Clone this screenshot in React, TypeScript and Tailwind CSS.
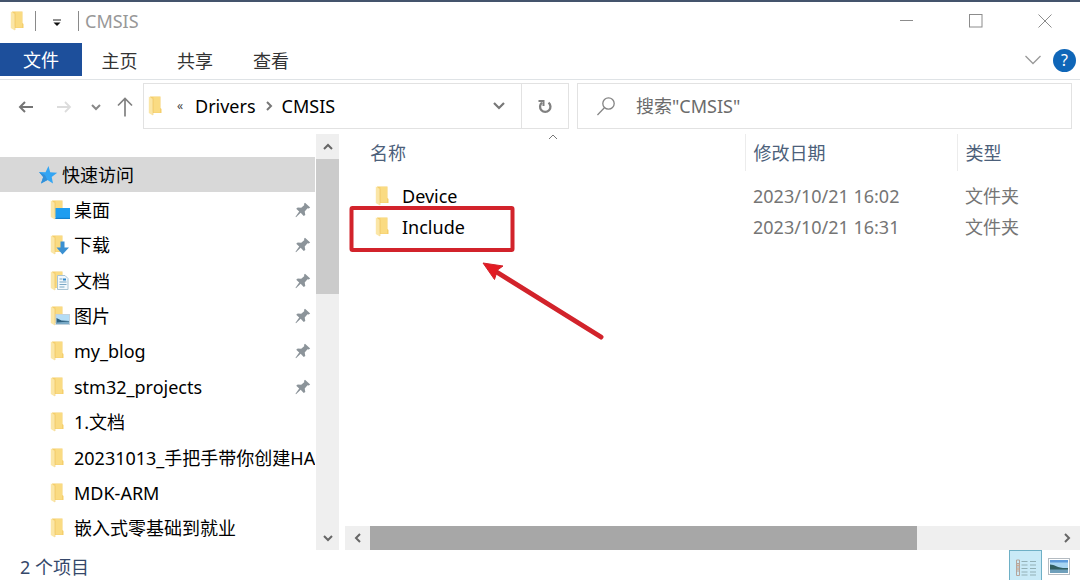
import { useState, type ReactNode } from "react";

type Badge = "desktop" | "download" | "document" | "picture";

interface Place {
  name: string;
  badge?: Badge;
  pinned?: boolean;
}

const places: Place[] = [
  { name: "桌面", badge: "desktop", pinned: true },
  { name: "下载", badge: "download", pinned: true },
  { name: "文档", badge: "document", pinned: true },
  { name: "图片", badge: "picture", pinned: true },
  { name: "my_blog", pinned: true },
  { name: "stm32_projects", pinned: true },
  { name: "1.文档" },
  { name: "20231013_手把手带你创建HA" },
  { name: "MDK-ARM" },
  { name: "嵌入式零基础到就业" },
];

const files = [
  { name: "Device", modified: "2023/10/21 16:02", kind: "文件夹" },
  { name: "Include", modified: "2023/10/21 16:31", kind: "文件夹" },
];

function FolderShape() {
  return (
    <g>
      <path d="M2 .500h10.500v11.500l1 1v4h-9z" fill="#f5cf6c" />
      <path d="M5.500 1h6.500v15.500h-6.500z" fill="#fadb82" />
      <path d="M.800.500l4 2.500v16.500l-4-2.500z" fill="#fbe6a6" />
      <path d="M5 3v16" stroke="#eecb70" strokeWidth="0.600" />
    </g>
  );
}

function FolderIcon({ badge }: { badge?: Badge }) {
  return (
    <svg width="20" height="20" viewBox="0 0 20 20" className="shrink-0" aria-hidden="true">
      <FolderShape />
      {badge === "desktop" && (
        <g>
          <rect x="5.500" y="8" width="14.500" height="11" fill="#1f9df0" />
          <path d="M5.500 18.400h14.500" stroke="#1580cc" strokeWidth="1.200" />
        </g>
      )}
      {badge === "download" && (
        <path d="M10.500 6.500h4v6h4.500l-6.500 7-6-7h4z" fill="#3a90d2" />
      )}
      {badge === "document" && (
        <g>
          <path d="M7.500 4.500h7.500l3 3v11h-10.500z" fill="#f2f8fc" stroke="#a9c4d4" />
          <path d="M9.500 8h3M9.500 11h7M9.500 13.500h7M9.500 16h5" stroke="#7ba8c6" />
          <path d="M13 8.500h3" stroke="#2f86c9" strokeWidth="2" />
        </g>
      )}
      {badge === "picture" && (
        <g>
          <rect x="6" y="8.500" width="13.500" height="10" fill="#b4ddf6" stroke="#c3d2dc" />
          <path d="M6.500 12l5 2.500 7.500.500v3h-12.500z" fill="#2e6280" />
          <path d="M6.500 16.500l12.500-1v2.500h-12.500z" fill="#79a9c6" />
        </g>
      )}
    </svg>
  );
}

function SmallFolder() {
  return (
    <svg width="14" height="20" viewBox="0 0 14 20" className="shrink-0" aria-hidden="true">
      <FolderShape />
    </svg>
  );
}

function StarIcon() {
  return (
    <svg width="20" height="20" viewBox="0 0 20 20" className="shrink-0" aria-hidden="true">
      <path d="M10.500 1l1.700 6.200 7 .500-5.500 4.300 1.300 6.500-5.500-3.500-6.500 3.500 2.200-6.500-4.200-5 6.500.200z" fill="#33a5f3" />
      <path d="M9.500 15l-6.500 3.500 2.200-6.500-4.200-5 6 3z" fill="#3390d8" />
    </svg>
  );
}

function PinIcon() {
  return (
    <svg width="16" height="16" viewBox="0 0 16 16" className="shrink-0" aria-hidden="true">
      <path d="M10 .800l5.200 4.700-1.500 1-1.200-.300-2.800 3.300.600 3.500-1.600 1-3-3.300-4.700 4.500-.500-.500 3.700-5.300-3-2.700 1.500-1.200 3.500.300 3.200-2.700-.500-1.200z" fill="#8c949a" />
    </svg>
  );
}

function Chevron({ direction, className }: { direction: "up" | "down" | "left" | "right"; className: string }) {
  const paths = {
    up: "M1 7l4-4 4 4",
    down: "M1 3l4 4 4-4",
    left: "M7 1l-4 4 4 4",
    right: "M3 1l4 4-4 4",
  };
  return (
    <svg width="10" height="10" viewBox="0 0 10 10" fill="none" stroke="currentColor" className={className} aria-hidden="true">
      <path d={paths[direction]} />
    </svg>
  );
}

function PlainButton({ label, className, children }: { label: string; className: string; children: ReactNode }) {
  return (
    <button type="button" aria-label={label} className={`flex shrink-0 items-center justify-center ${className}`}>
      {children}
    </button>
  );
}

function TitleBar() {
  return (
    <header className="flex h-[43px] items-center border-t-2 border-[#44546c] pb-[3px] pl-[10px] pr-[27px]">
      <SmallFolder />
      <span className="ml-[11px] h-5 w-px bg-[#8a8a8a]" />
      <PlainButton label="自定义快速访问工具栏" className="ml-3 h-6 w-[18px] pt-1">
        <svg width="8" height="8" viewBox="0 0 8 8" aria-hidden="true">
          <path d="M0 1h8" stroke="#222" />
          <path d="M.5 3.500h7l-3.500 3.500z" fill="#111" />
        </svg>
      </PlainButton>
      <span className="ml-3 h-5 w-px bg-[#8a8a8a]" />
      <h1 className="ml-[6px] text-[#989898]">CMSIS</h1>
      <div className="ml-auto flex items-center gap-[53px] text-[#8c8c8c]">
        <PlainButton label="最小化" className="size-4">
          <svg width="14" height="14" viewBox="0 0 14 14" stroke="currentColor"><path d="M0 6.500h13" /></svg>
        </PlainButton>
        <PlainButton label="最大化" className="size-4">
          <svg width="14" height="14" viewBox="0 0 14 14" fill="none" stroke="currentColor"><rect x=".5" y=".5" width="12.500" height="12.500" /></svg>
        </PlainButton>
        <PlainButton label="关闭" className="size-4">
          <svg width="14" height="14" viewBox="0 0 14 14" stroke="currentColor"><path d="M.5.500l13 13M13.500.500l-13 13" /></svg>
        </PlainButton>
      </div>
    </header>
  );
}

function Ribbon() {
  return (
    <nav className="flex h-[37px] items-start border-b border-[#dfe3e6] pr-1">
      <button type="button" className="h-[33px] w-[82px] bg-[#1d4f9b] text-white">文件</button>
      <button type="button" className="h-9 w-[75px] text-[#333]">主页</button>
      <button type="button" className="h-9 w-[76px] text-[#333]">共享</button>
      <button type="button" className="h-9 w-[76px] text-[#333]">查看</button>
      <div className="ml-auto flex h-[34px] items-center gap-3">
        <PlainButton label="展开功能区" className="h-6 w-4 text-[#999]">
          <svg width="16" height="10" viewBox="0 0 16 10" fill="none" stroke="currentColor" strokeWidth="1.300"><path d="M.5 1l7.500 7.500 7.500-7.500" /></svg>
        </PlainButton>
        <button type="button" className="size-[23px] rounded-full bg-[#0f66b8] text-base leading-[23px] text-white">?</button>
      </div>
    </nav>
  );
}

function AddressBar() {
  return (
    <div className="flex h-[54px] items-start pr-2 pt-[3px]">
      <div className="flex h-[46px] w-[143px] shrink-0 items-center pl-[18px] pt-[2px]">
        <PlainButton label="后退" className="h-6 w-4 text-[#757575]">
          <svg width="16" height="14" viewBox="0 0 16 14" fill="none" stroke="currentColor" strokeWidth="2"><path d="M15 7h-13M7 2l-5 5 5 5" /></svg>
        </PlainButton>
        <PlainButton label="前进" className="ml-[22px] h-6 w-4 text-[#dcdcdc]">
          <svg width="16" height="14" viewBox="0 0 16 14" fill="none" stroke="currentColor" strokeWidth="1.800"><path d="M1 7h13M9 2l5 5-5 5" /></svg>
        </PlainButton>
        <PlainButton label="最近浏览的位置" className="ml-[18px] h-6 w-3 text-[#888]">
          <Chevron direction="down" className="stroke-2" />
        </PlainButton>
        <PlainButton label="上移" className="ml-[15px] h-6 w-4 text-[#808080]">
          <svg width="16" height="20" viewBox="0 0 16 20" fill="none" stroke="currentColor" strokeWidth="1.700"><path d="M8 19.500v-18M1 8.500l7-7 7 7" /></svg>
        </PlainButton>
      </div>
      <div className="flex h-[46px] w-[426px] shrink-0 items-center border border-[#e2e2e2] pl-[4px] text-black">
        <SmallFolder />
        <span className="ml-[15px] w-[11px] text-xs text-[#444]">«</span>
        <button type="button" className="ml-[7px]">Drivers</button>
        <Chevron direction="right" className="mx-2 stroke-2 text-[#777]" />
        <button type="button">CMSIS</button>
        <PlainButton label="以前的位置" className="ml-auto h-full w-[44px] text-[#777]">
          <svg width="12" height="10" viewBox="0 0 12 10" fill="none" stroke="currentColor" strokeWidth="2.200"><path d="M1 2l5 5 5-5" /></svg>
        </PlainButton>
        <PlainButton label="刷新" className="h-full w-[47px] border-l border-[#e2e2e2] text-[#808080]">
          <svg width="14" height="15" viewBox="0 0 14 15" fill="none" stroke="currentColor" strokeWidth="2.300">
            <path d="M4 3.700a5.200 5.200 0 1 0 6.500 0" />
            <path d="M.5 2h5v5" strokeWidth="2" />
          </svg>
        </PlainButton>
      </div>
      <label className="ml-2 flex h-[46px] min-w-0 flex-1 items-center border border-[#e2e2e2] pl-[19px]">
        <svg width="18" height="19" viewBox="0 0 18 19" fill="none" stroke="#848484" strokeWidth="1.300" className="shrink-0" aria-hidden="true">
          <circle cx="11.500" cy="6.500" r="5.700" />
          <path d="M7.400 10.800l-7 7.200" />
        </svg>
        <input type="search" aria-label="搜索" placeholder={'搜索"CMSIS"'} className="ml-[21px] min-w-0 flex-1 outline-none placeholder:text-[#6b6b6b]" />
      </label>
    </div>
  );
}

function Sidebar() {
  return (
    <aside className="flex w-[340px] shrink-0 pr-px text-black">
      <ul className="grid min-w-0 flex-1 auto-rows-fr pb-1 pt-[23px]">
        <li className="flex">
          <a href="#quick" className="flex flex-1 items-center gap-1 bg-[#d8d8d8] pl-[38px]">
            <StarIcon />
            快速访问
          </a>
        </li>
        {places.map((place) => (
          <li key={place.name} className="flex">
            <a href={`#${place.name}`} className="flex min-w-0 flex-1 items-center pl-[50px]">
              <FolderIcon badge={place.badge} />
              <span className="ml-1 flex-1 overflow-hidden whitespace-nowrap">{place.name}</span>
              {place.pinned && <span className="mr-1"><PinIcon /></span>}
            </a>
          </li>
        ))}
      </ul>
      <div className="ml-px flex w-[23px] flex-col bg-[#efefef] text-[#666]">
        <PlainButton label="向上滚动" className="h-[25px]"><Chevron direction="up" className="stroke-2" /></PlainButton>
        <div className="h-[135px] bg-[#cbcbcb]" />
        <PlainButton label="向下滚动" className="mt-auto h-6"><Chevron direction="down" className="stroke-2" /></PlainButton>
      </div>
    </aside>
  );
}

function FilePane() {
  return (
    <main className="relative ml-[5px] flex min-w-0 flex-1 flex-col">
      <table className="w-full table-fixed text-left text-[#757575]">
        <thead>
          <tr className="h-[37px] text-[#4c607a]">
            <th className="relative w-[400px] border-r border-[#ececec] pl-[25px] font-normal">
              名称
              <Chevron direction="up" className="absolute left-[203px] top-[-2px] text-[#777]" />
            </th>
            <th className="w-[212px] border-r border-[#ececec] pl-2 font-normal">修改日期</th>
            <th className="pl-2 font-normal">类型</th>
          </tr>
        </thead>
        <tbody>
          <tr className="h-[9px]" aria-hidden="true"><td colSpan={3} /></tr>
          {files.map((file) => (
            <tr key={file.name} className="h-[31px]">
              <td className="pl-[30px]">
                <a href={`#${file.name}`} className="flex items-center gap-[13px] text-black">
                  <SmallFolder />
                  {file.name}
                </a>
              </td>
              <td className="pl-2">{file.modified}</td>
              <td className="pl-2">{file.kind}</td>
            </tr>
          ))}
        </tbody>
      </table>
      <svg width="270" height="140" viewBox="0 0 270 140" className="pointer-events-none absolute left-0 top-[70px]" fill="none" aria-hidden="true">
        <rect x="6.500" y="4" width="161" height="42" rx="1" stroke="#d2232b" strokeWidth="4" />
        <path d="M150 67l106 66" stroke="#d2232b" strokeWidth="5" strokeLinecap="round" />
        <path d="M138 59l20 3-5.500 4-3 9.500z" fill="#e31b23" stroke="#d2232b" />
      </svg>
      <div className="mt-auto flex h-6 bg-[#efefef] text-[#666]">
        <PlainButton label="向左滚动" className="w-[25px]"><Chevron direction="left" className="stroke-2" /></PlainButton>
        <div className="flex flex-1"><div className="w-4/5 bg-[#a7a7a7]" /></div>
        <PlainButton label="向右滚动" className="w-[26px]"><Chevron direction="right" className="stroke-2" /></PlainButton>
      </div>
    </main>
  );
}

function StatusBar() {
  const [view, setView] = useState<"details" | "thumbnails">("details");
  return (
    <footer className="flex h-[30px] items-stretch pl-5 pr-[5px] text-[#35486a]">
      <p className="self-center pt-1">2 个项目</p>
      <button
        type="button"
        aria-label="详细信息"
        aria-pressed={view === "details"}
        onClick={() => setView("details")}
        className={`ml-auto flex w-[33px] justify-center pt-2 ${view === "details" ? "border border-b-0 border-[#6eb0c6] bg-[#c9eaf7]" : ""}`}
      >
        <svg width="20" height="18" viewBox="0 0 20 18" fill="none" aria-hidden="true">
          <path d="M.5 1h3v15.500h-3zM.5 4.500h3M.5 8h3M.5 12h3" stroke="#b5a59d" />
          <path d="M1 6.200h2M1 10h2" stroke="#d78d63" />
          <path d="M5.500 2.500h6M14 2.500h6M5.500 6h6M14 6h6M5.500 9.500h6M14 9.500h6M5.500 13h6M14 13h6M5.500 16h6M14 16h6" stroke="#93b0b6" />
        </svg>
      </button>
      <button
        type="button"
        aria-label="大缩略图"
        aria-pressed={view === "thumbnails"}
        onClick={() => setView("thumbnails")}
        className={`flex w-[33px] justify-center pt-2 ${view === "thumbnails" ? "bg-[#c9eaf7]" : ""}`}
      >
        <svg width="22" height="18" viewBox="0 0 22 18" aria-hidden="true">
          <rect x=".5" y=".5" width="21" height="16" fill="#fff" stroke="#b4bbc1" />
          <path d="M2 2h18v13h-18z" fill="#a8d5f3" />
          <path d="M2 2h18v2.500h-18z" fill="#5e9bdc" />
          <path d="M2 6.500c5 0 7 4 18 3.500v2h-18z" fill="#315e62" />
          <path d="M2 11.500h18v3.500h-18z" fill="#6f9fba" />
        </svg>
      </button>
    </footer>
  );
}

export default function App() {
  return (
    <div className="flex min-h-screen flex-col bg-white font-['Noto_Sans','Noto_Sans_CJK_SC',sans-serif] text-lg leading-6">
      <TitleBar />
      <Ribbon />
      <AddressBar />
      <div className="flex flex-1">
        <Sidebar />
        <FilePane />
      </div>
      <StatusBar />
    </div>
  );
}
